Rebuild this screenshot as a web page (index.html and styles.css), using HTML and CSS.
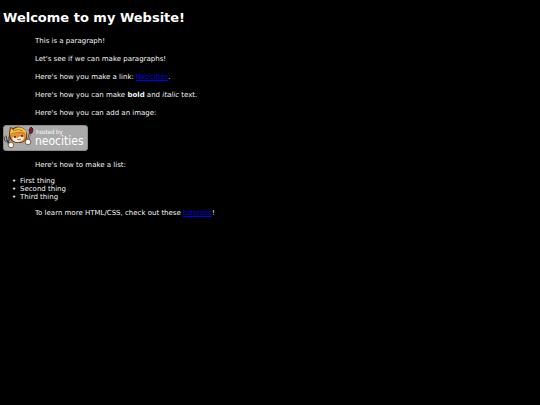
FILE: index.html
```html
<!DOCTYPE html>
<html lang="en">
  <head>
    <meta charset="UTF-8">
    <title>My Website</title>
    <link rel="stylesheet" href="styles.css">
  </head>
  <body>
    <h1>Welcome to my Website!</h1>

    <p>This is a paragraph!</p>

    <p>Let's see if we can make paragraphs!</p>

    <p>Here's how you make a link: <a href="https://neocities.org">Neocities</a>.</p>

    <p>Here's how you can make <strong>bold</strong> and <em>italic</em> text.</p>

    <p>Here's how you can add an image:</p>

    <svg class="badge" viewBox="0 0 85 26" role="img" aria-label="hosted by neocities">
      <rect x="0.500" y="0.500" width="84" height="25" rx="2.500" fill="#aaa" stroke="#8c8c8c"/>
      <!-- fork -->
      <g fill="none" stroke="#30343c" stroke-linecap="round">
        <path d="M1 12 L2 16 L5 17 M3 11 L4 15 M6 12 L6 16 L4 17" stroke-width="1"/>
        <path d="M4 16 L8 22" stroke-width="2"/>
      </g>
      <path d="M2 13 L3 16 L7 21" fill="none" stroke="#a9b2bd" stroke-width=".7"/>
      <!-- cat -->
      <path d="M6 8 L7 2 L10 3 Q15 0 20 3 Q25 6 24 13 Q22 18 16 18 Q8 18 6 12 Z" fill="#603817"/>
      <path d="M7 8 L23 7 Q24 13 21 16 Q14 19 9 15 Q7 12 7 8 Z" fill="#ec8b31"/>
      <path d="M9 13 Q12 11 14 13 Q18 10 21 12 Q21 16 15 17 Q10 17 9 13 Z" fill="#fff1df"/>
      <path d="M7 8 L8 3 L10 5 Q14 1 19 3 Q24 5 23 9 Q17 6 8 10 Z" fill="#f4c443"/>
      <path d="M10 6 Q15 3 20 6 M8 9 Q14 6 22 8" fill="none" stroke="#a76a1c" stroke-width=".8"/>
      <circle cx="12" cy="12" r=".9" fill="#25170e"/>
      <circle cx="19" cy="11" r=".9" fill="#25170e"/>
      <path d="M14 14 Q16 16 18 14" fill="none" stroke="#93352a" stroke-width=".8"/>
      <circle cx="8" cy="20" r="2.800" fill="#fff4e4" stroke="#5f4635" stroke-width=".8"/>
      <!-- paintbrush -->
      <path d="M25 16 L27 8" stroke="#4f3c2e" stroke-width="2"/>
      <path d="M25 16 L27 9" stroke="#d8cab4" stroke-width=".8"/>
      <path d="M27 8 L26 5 L28 2 L30 4 L29 8 Z" fill="#8d1720" stroke="#32131a" stroke-width=".8"/>
      <circle cx="25" cy="17" r="2.800" fill="#fff4e4" stroke="#5f4635" stroke-width=".8"/>
      <text class="badge-small" x="33" y="9">hosted by</text>
      <text class="badge-name" x="32" y="20">neocities</text>
    </svg>

    <p>Here's how to make a list:</p>

    <ul>
      <li>First thing</li>
      <li>Second thing</li>
      <li>Third thing</li>
    </ul>

    <p>To learn more HTML/CSS, check out these <a href="https://neocities.org/tutorials">tutorials</a>!</p>
  </body>
</html>
```

FILE: styles.css
```css
body {
  margin: 10px 3px;
  background-color: black;
  color: #f4f4f4;
  font-family: Verdana, "DejaVu Sans", sans-serif;
  font-size: 7px;
  line-height: 8px;
}

h1 {
  margin: 0 0 11px;
  color: white;
  font-size: 13px;
  line-height: 16px;
}

p {
  margin: 10px 0 10px 32px;
}

a {
  color: #0000ee;
}

ul {
  margin: -2px 0;
  padding-left: 9px;
  list-style: none;
}

li {
  display: flex;
}

li::before {
  content: "•";
  width: 8px;
}

.badge {
  display: block;
  width: 85px;
  margin-top: -2px;
}

.badge text {
  fill: white;
  font-family: "DejaVu Sans Condensed", "Open Sans", sans-serif;
}

.badge-small {
  font-size: 6px;
}

.badge-name {
  font-size: 12px;
}
```
